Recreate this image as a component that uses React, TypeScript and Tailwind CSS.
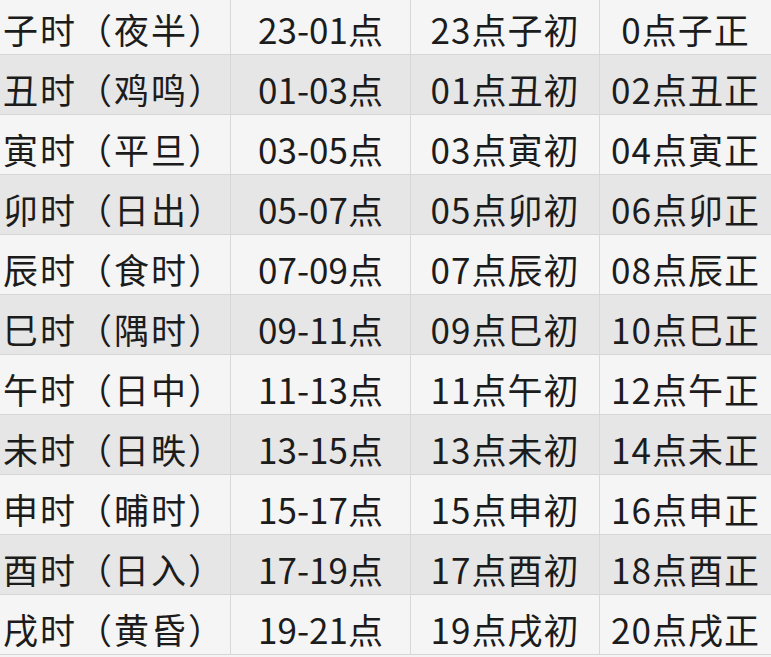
const rows: [string, string, string, string][] = [
  ['子时（夜半）', '23-01点', '23点子初', '0点子正'],
  ['丑时（鸡鸣）', '01-03点', '01点丑初', '02点丑正'],
  ['寅时（平旦）', '03-05点', '03点寅初', '04点寅正'],
  ['卯时（日出）', '05-07点', '05点卯初', '06点卯正'],
  ['辰时（食时）', '07-09点', '07点辰初', '08点辰正'],
  ['巳时（隅时）', '09-11点', '09点巳初', '10点巳正'],
  ['午时（日中）', '11-13点', '11点午初', '12点午正'],
  ['未时（日昳）', '13-15点', '13点未初', '14点未正'],
  ['申时（晡时）', '15-17点', '15点申初', '16点申正'],
  ['酉时（日入）', '17-19点', '17点酉初', '18点酉正'],
  ['戌时（黄昏）', '19-21点', '19点戌初', '20点戌正'],
];

export default function App() {
  return (
    <div className="w-[771px] h-[657px] overflow-hidden bg-[#f4f4f4]">
      <div
        className="mt-[-5px] text-[35px] leading-none text-[#1c1c1c]"
        style={{ fontFamily: '"Noto Sans CJK SC", "Noto Sans", sans-serif' }}
      >
        {rows.map((r, i) => (
          <div
            key={r[0]}
            className={`grid grid-cols-[231px_180px_189px_171px] h-[60px] border-b border-[#d6d6d6] ${
              i % 2 === 0 ? 'bg-[#f5f5f5]' : 'bg-[#e6e6e6]'
            }`}
          >
            <div className="flex items-center pl-[3px] pt-[7px] tracking-[2px] border-r border-[#d8d8d8]">{r[0]}</div>
            <div className="flex items-center justify-center pt-[7px] border-r border-[#d8d8d8]">{r[1]}</div>
            <div className="flex items-center justify-center pt-[7px] tracking-[1px] border-r border-[#d8d8d8]">{r[2]}</div>
            <div className="flex items-center justify-center pt-[7px] tracking-[1px]">{r[3]}</div>
          </div>
        ))}
      </div>
    </div>
  );
}
